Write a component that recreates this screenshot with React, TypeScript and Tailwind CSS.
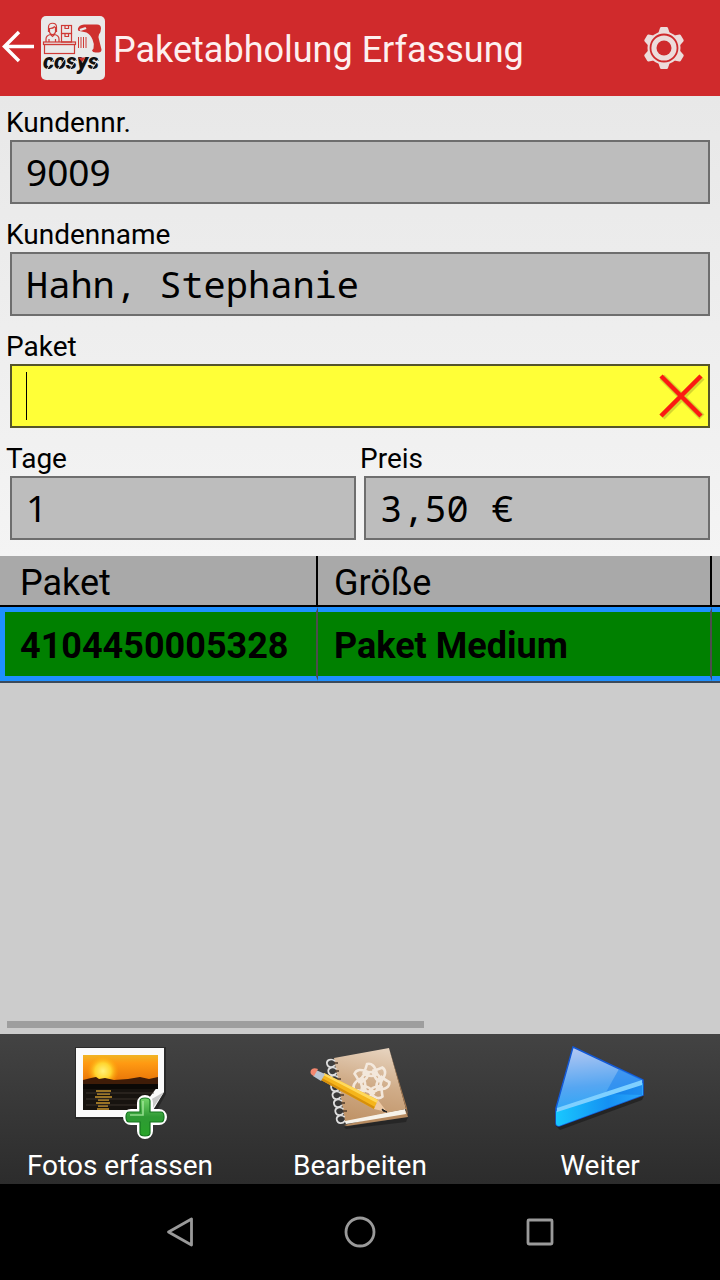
import type { ReactNode } from 'react';

const MONO = "font-['Noto_Sans_Mono','Droid_Sans_Mono','DejaVu_Sans_Mono',monospace]";
const DIGITS = "font-['Noto_Sans',sans-serif]";

function CosysLogo() {
  return (
    <svg viewBox="0 0 64 64" className="size-16 shrink-0" aria-label="cosys">
      <rect width="64" height="64" rx="5" fill="#e9e9e9" />
      <g fill="none" stroke="#cf3a36" strokeWidth="1.2">
        <rect x="2.500" y="26" width="32" height="2.500" />
        <rect x="3.500" y="28.500" width="30" height="9" />
        <path d="M5 26v-3c0-3 2-4 4.500-4.500l2 2 2-2c2.500.5 4.500 1.500 4.500 4.500v3M8 26v-3M14.500 26v-3" />
        <path d="M7.500 16V11c0-5 8-5 8 0v5M9 12.500c2 0 4-1 5-2M8.500 12v4c1 3.500 5 3.500 6 0v-5" />
        <rect x="20.500" y="9.500" width="10" height="8" />
        <rect x="20.500" y="17.500" width="10" height="8.500" />
        <path d="M24 9.500v3h3.500v-3M24 17.500v3h3.500v-3" />
        <path d="M37.500 21v11M40 21v11M42.500 21v11M45 21v11" strokeWidth="1" />
      </g>
      <path
        d="M37 12.500q1-3.500 6-4h13q4 0 4 4 0 3-2 6-1 2 0 5l2.500 10q0 3-3 3h-3q-3 0-3.500-2l1.500-2q1-5-1-9-2-5-6-7l-7-1.500q-2 0-1.500-2.500z"
        fill="#cf302e"
      />
      <path d="M38.500 13l6-2 1 2-6 2z" fill="#e9e9e9" />
      <text
        x="2"
        y="53"
        fontFamily="Roboto, sans-serif"
        fontSize="22"
        fontWeight="900"
        fontStyle="italic"
        fill="#111"
      >
        cosys
      </text>
      <path d="M6 53l8-12M17 53l8-12M29 53l8-12M51 53l8-12" stroke="#e9e9e9" strokeWidth=".9" />
      <path d="M37.500 41.500h7l-3.500 4.500z" fill="#cf302e" />
    </svg>
  );
}

function Gear() {
  return (
    <svg viewBox="0 0 48 48" className="size-12" aria-hidden="true">
      <g fill="#ecdcdb">
        <circle cx="24" cy="24" r="16.500" />
        {[0, 60, 120, 180, 240, 300].map((angle) => (
          <path
            key={angle}
            d="M18 10l2-6q.3-1 1.300-1h5.400q1 0 1.300 1l2 6z"
            transform={`rotate(${angle} 24 24)`}
          />
        ))}
      </g>
      <circle cx="24" cy="24" r="13.500" fill="none" stroke="#cf2a2c" strokeWidth="1.800" />
      <circle cx="24" cy="24" r="7.500" fill="#cf2a2c" />
    </svg>
  );
}

function PhotoIcon() {
  return (
    <svg viewBox="0 0 120 114" className="h-[114px] w-[120px]" aria-hidden="true">
      <defs>
        <linearGradient id="sky" x1="0" y1="0" x2="0" y2="1">
          <stop offset="0" stopColor="#f0b524" />
          <stop offset=".3" stopColor="#ff9a12" />
          <stop offset="1" stopColor="#e87408" />
        </linearGradient>
        <radialGradient id="sun">
          <stop offset="0" stopColor="#fff27a" />
          <stop offset=".5" stopColor="#ffd52e" />
          <stop offset="1" stopColor="#ffa000" stopOpacity="0" />
        </radialGradient>
        <linearGradient id="plus" x1="0" y1="0" x2="0" y2="1">
          <stop offset="0" stopColor="#74d469" />
          <stop offset=".5" stopColor="#2e9a34" />
          <stop offset="1" stopColor="#28a428" />
        </linearGradient>
      </defs>
      <path d="M15 13h91v47L92 85H15z" fill="#1c1c1c" opacity=".6" />
      <path d="M16 14h88v44L89 83H16z" fill="#fafafa" />
      <path d="M23 21h75v31L80 76H23z" fill="#17130f" />
      <rect x="23" y="21" width="75" height="27" fill="url(#sky)" />
      <circle cx="43" cy="37" r="16" fill="url(#sun)" />
      <path d="M23 46l8-2 5-1 3 2 6-1 9 2 14-1 12-2 9 2 9-2v9H23z" fill="#3f1c08" />
      <path d="M23 50h75v5H23z" fill="#0b0806" />
      <path
        d="M36 57h15M37 60h13M35 63h17M38 66h11M36 69h14M38 72h10M37 75h12"
        stroke="#9a7426"
        strokeWidth="1.800"
      />
      <path d="M26 59h68M26 65h60M26 71h54" stroke="#4a4138" strokeWidth="1" opacity=".7" />
      <path d="M104 58L90 66v12z" fill="#c9c9c9" />
      <path d="M85 69v28M71 83h28" stroke="#fff" strokeWidth="16" strokeLinecap="round" />
      <path
        d="M80 67q0-3 5-3t5 3v11h11q3 0 3 5t-3 5H90v11q0 3-5 3t-5-3V88H69q-3 0-3-5t3-5h11z"
        fill="url(#plus)"
        stroke="#14761f"
        strokeWidth="1.200"
      />
      <path d="M83 67v14H70" fill="none" stroke="#a9eaa0" strokeWidth="1.600" opacity=".8" />
    </svg>
  );
}

function NotebookIcon() {
  return (
    <svg viewBox="0 0 120 114" className="h-[114px] w-[120px]" aria-hidden="true">
      <defs>
        <linearGradient id="cover" x1=".6" y1="0" x2=".4" y2="1">
          <stop offset="0" stopColor="#e6d2bd" />
          <stop offset=".5" stopColor="#d0ac88" />
          <stop offset="1" stopColor="#c09468" />
        </linearGradient>
      </defs>
      <path d="M44 93l64-10-2 5-60 7z" fill="#1c1c1c" opacity=".6" />
      <path d="M44 91l62-14 2 6-61 9z" fill="#b78b60" />
      <path d="M44 86l61-11 1 5-60 10z" fill="#f7f3ea" />
      <path d="M34 24l55-10 17 61-61 12z" fill="url(#cover)" />
      <path d="M89 14l17 61 2 7-1-8z" fill="#a87a50" />
      <g transform="translate(71 48)" fill="none" stroke="#f7eee4" strokeWidth="2.600" opacity=".9">
        {[0, 51, 103, 154, 206, 257, 309].map((angle) => (
          <path key={angle} d="M-8-8Q-6-11-4-18Q3-20 6-8Q2-4-8-8" transform={`rotate(${angle})`} />
        ))}
        <circle r="10" />
      </g>
      <g fill="none" stroke="#dedede" strokeWidth="1.700">
        {[0, 1, 2, 3, 4, 5, 6, 7].map((n) => (
          <path
            key={n}
            d="M35 27c-4-3-9-1-8 3s6 4 8 1"
            transform={`translate(${n * 1.4} ${n * 8})`}
          />
        ))}
      </g>
      <path
        d="M34 29h4M35 37h4M37 45h4M38 53h4M40 61h4M41 69h4M43 77h4"
        stroke="#4c3a2b"
        strokeWidth="1.500"
      />
      <path d="M24 39L78 66l-4 9-53-29z" fill="#f5b51b" />
      <path d="M24 39L78 66l-1 3-54-28z" fill="#ffd95c" />
      <path d="M22 44l53 29-1 2-53-29z" fill="#d68f0c" />
      <path d="M78 66l9 12-13-3z" fill="#edc9a4" />
      <path d="M82 75l5 3-4-1z" fill="#222" stroke="#222" />
      <path d="M16 36l9 4-4 7-8-5z" fill="#b9c4d2" />
      <path d="M11 36q2-3 7-1l-4 7q-5-2-3-6z" fill="#f3876f" />
    </svg>
  );
}

function NextIcon() {
  return (
    <svg viewBox="0 0 120 114" className="h-[114px] w-[120px]" aria-hidden="true">
      <defs>
        <linearGradient id="face" x1=".3" y1="0" x2=".4" y2="1">
          <stop offset="0" stopColor="#b4c8f2" />
          <stop offset=".5" stopColor="#55a6f2" />
          <stop offset="1" stopColor="#12a8fa" />
        </linearGradient>
        <linearGradient id="side" x1="0" y1="0" x2="1" y2="0">
          <stop offset="0" stopColor="#18c8ff" />
          <stop offset=".6" stopColor="#1590f2" />
          <stop offset="1" stopColor="#2aa6fa" />
        </linearGradient>
      </defs>
      <path d="M16 92l88-30-2 4-82 30z" fill="#111" opacity=".5" />
      <path d="M33 13L103 46v15L19 92q-3 0-3-3V74z" fill="url(#face)" stroke="#1258d6" strokeWidth="1.500" />
      <path d="M79 35l24 11-38 14z" fill="#1f86ee" opacity=".6" />
      <path d="M16 77l87-28v12L19 92q-3 0-3-3z" fill="url(#side)" />
      <path d="M70 60l32-11v12z" fill="#0c62da" opacity=".35" />
      <path d="M17 74l85-28v5L17 78z" fill="#7fd0ff" />
    </svg>
  );
}

function Field({
  id,
  label,
  value,
  wide,
  numeric,
}: {
  id: string;
  label: string;
  value: string;
  wide?: boolean;
  numeric?: boolean;
}) {
  return (
    <div className={wide ? 'col-span-2 px-1' : 'px-1'}>
      <label htmlFor={id} className="-ml-1 mb-[3px] block text-[28px] leading-7">
        {label}
      </label>
      <input
        id={id}
        readOnly
        defaultValue={value}
        className={`block h-16 w-full border-2 border-[#6e6e6e] bg-[#bdbdbd] px-3.5 pb-0.5 text-[37px] outline-none ${numeric ? DIGITS : MONO}`}
      />
    </div>
  );
}

function ToolButton({ label, children }: { label: string; children: ReactNode }) {
  return (
    <button type="button" className="flex flex-col items-center text-[28px] leading-9 text-white">
      {children}
      <span>{label}</span>
    </button>
  );
}

export default function App() {
  return (
    <div className="flex min-h-screen flex-col bg-[#cccccc] font-[Roboto,sans-serif] text-black">
      <header className="flex h-24 items-center bg-[#d02a2c] pr-8 text-white">
        <button type="button" aria-label="Zurück" className="flex w-[41px] pl-0.5">
          <svg viewBox="0 0 36 36" className="size-9" fill="none" stroke="#fff" strokeWidth="3.500">
            <path d="M32 16.500H3M17 2L2.500 16.500 17 31" />
          </svg>
        </button>
        <CosysLogo />
        <h1 className="flex-1 pt-1 pl-2 text-[36px] leading-10 text-[#fdf0f0]">
          Paketabholung Erfassung
        </h1>
        <button type="button" aria-label="Einstellungen">
          <Gear />
        </button>
      </header>

      <form className="grid grid-cols-2 gap-y-[15px] bg-linear-to-b from-[#e8e8e8] to-[#f4f4f4] px-1.5 pt-[13px] pb-4">
        <Field id="kundennr" label="Kundennr." value="9009" wide numeric />
        <div className="col-span-2 pt-0.5">
          <Field id="kundenname" label="Kundenname" value="Hahn, Stephanie" />
        </div>
        <div className="col-span-2 px-1 pt-0.5">
          <label htmlFor="paket" className="-ml-1 mb-[3px] block text-[28px] leading-7">
            Paket
          </label>
          <div className="flex h-16 items-center border-2 border-[#55552a] bg-[#ffff37] pl-3.5">
            <span className="h-12 w-px bg-black" />
            <input
              id="paket"
              className={`h-full min-w-0 flex-1 bg-transparent text-[37px] caret-transparent outline-none ${MONO}`}
            />
            <button type="button" aria-label="Leeren" className="pr-[3px]">
              <svg viewBox="0 0 48 48" className="size-12" fill="none">
                <path d="M5 5l40 40M45 5L5 45" stroke="#8a8a20" strokeWidth="7" opacity=".35" />
                <path d="M4 4l40 40M44 4L4 44" stroke="#fb1a12" strokeWidth="4.500" />
              </svg>
            </button>
          </div>
        </div>
        <div className="pt-0.5">
          <Field id="tage" label="Tage" value="1" numeric />
        </div>
        <div className="pt-0.5">
          <Field id="preis" label="Preis" value="3,50 €" />
        </div>
      </form>

      <section className="flex flex-1 flex-col justify-between overflow-hidden">
        <div className="overflow-hidden">
          <table className="w-[1220px] table-fixed border-separate border-spacing-0 border-b-2 border-[#3b4a5c] text-left text-[36px] leading-10">
            <colgroup>
              <col className="w-[318px]" />
              <col className="w-[394px]" />
              <col />
            </colgroup>
            <thead>
              <tr className="h-[51px] bg-[#a9a9a9]">
                <th className="border-r-2 border-b-2 border-black pt-1 pl-5 font-normal">Paket</th>
                <th className="border-r-2 border-b-2 border-black pt-1 pl-4 font-normal">Größe</th>
                <th className="border-b-2 border-black" />
              </tr>
            </thead>
            <tbody>
              <tr className="h-[74px] bg-[#008000] font-bold">
                <td className="border-y-5 border-r-2 border-l-5 border-y-[#1e90ff] border-r-[#4d4d4d] border-l-[#1e90ff] pt-1 pl-[15px]">
                  4104450005328
                </td>
                <td className="border-y-5 border-r-2 border-y-[#1e90ff] border-r-[#4d4d4d] pt-1 pl-4">
                  Paket Medium
                </td>
                <td className="border-y-5 border-[#1e90ff]" />
              </tr>
            </tbody>
          </table>
        </div>
        <div className="mb-1.5 px-[7px]">
          <div className="h-[7px] w-[59%] bg-[#9e9e9e]" />
        </div>
      </section>

      <div className="grid grid-cols-3 bg-linear-to-b from-[#434343] to-[#2c2c2c]">
        <ToolButton label="Fotos erfassen">
          <PhotoIcon />
        </ToolButton>
        <ToolButton label="Bearbeiten">
          <NotebookIcon />
        </ToolButton>
        <ToolButton label="Weiter">
          <NextIcon />
        </ToolButton>
      </div>

      <nav className="grid h-24 grid-cols-3 place-items-center bg-black px-[12.5%]">
        <button type="button" aria-label="Zurück">
          <svg viewBox="0 0 32 32" className="size-8" fill="none" stroke="#9a9a9a" strokeWidth="2.800">
            <path d="M4.500 16L27.500 3v26z" strokeLinejoin="round" />
          </svg>
        </button>
        <button type="button" aria-label="Start">
          <svg viewBox="0 0 32 32" className="size-8" fill="none" stroke="#9a9a9a" strokeWidth="2.800">
            <circle cx="16" cy="16" r="14" />
          </svg>
        </button>
        <button type="button" aria-label="Übersicht">
          <svg viewBox="0 0 32 32" className="size-8" fill="none" stroke="#9a9a9a" strokeWidth="2.800">
            <rect x="4" y="4" width="24" height="24" rx="1" />
          </svg>
        </button>
      </nav>
    </div>
  );
}
